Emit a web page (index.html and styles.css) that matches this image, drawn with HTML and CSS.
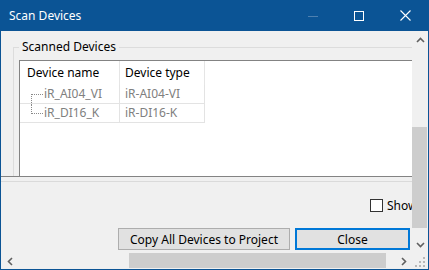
FILE: index.html
```html
<!DOCTYPE html>
<html lang="en">
<head>
    <meta charset="UTF-8">
    <title>Scan Devices</title>
    <link rel="stylesheet" href="styles.css">
</head>
<body>

<div class="window">
    <div class="titlebar">
        <span class="title">Scan Devices</span>
        <div class="caption-buttons">
            <span class="cap-btn"><svg width="10" height="10" viewBox="0 0 10 10"><path d="M0 5.5H10" stroke="#4d80b0" stroke-width="1"/></svg></span>
            <span class="cap-btn"><svg width="10" height="10" viewBox="0 0 10 10"><rect x="0.5" y="0.5" width="9" height="9" fill="none" stroke="#fff" stroke-width="1"/></svg></span>
            <span class="cap-btn"><svg width="11" height="11" viewBox="0 0 11 11"><path d="M0.5 0.5L10.5 10.5M10.5 0.5L0.5 10.5" stroke="#fff" stroke-width="1.1"/></svg></span>
        </div>
    </div>

    <div class="frame">
        <div class="viewport">
            <div class="upper-panel">
                <fieldset class="group">
                    <legend>Scanned Devices</legend>
                    <div class="listview">
                        <div class="lv-header">
                            <div class="col-name">Device name</div>
                            <div class="col-type">Device type</div>
                        </div>
                        <div class="lv-row">
                            <div class="col-name"><span class="tree tree-first"></span>iR_AI04_VI</div>
                            <div class="col-type">iR-AI04-VI</div>
                        </div>
                        <div class="lv-row">
                            <div class="col-name"><span class="tree tree-last"></span>iR_DI16_K</div>
                            <div class="col-type">iR-DI16-K</div>
                        </div>
                    </div>
                </fieldset>
            </div>
            <div class="lower-panel">
                <div class="options">
                    <label class="check"><span class="box"></span>Show</label>
                </div>
                <div class="actions">
                    <button class="btn btn-copy">Copy All Devices to Project</button>
                    <button class="btn btn-close">Close</button>
                </div>
            </div>
        </div>

        <div class="vscroll">
            <div class="arrow"><svg width="9" height="6" viewBox="0 0 9 6"><path d="M1 5L4.5 1.5L8 5" fill="none" stroke="#606060" stroke-width="1.6"/></svg></div>
            <div class="track-v"><div class="thumb-v"></div></div>
            <div class="arrow"><svg width="9" height="6" viewBox="0 0 9 6"><path d="M1 1L4.5 4.5L8 1" fill="none" stroke="#606060" stroke-width="1.6"/></svg></div>
        </div>

        <div class="hscroll">
            <div class="arrow"><svg width="6" height="9" viewBox="0 0 6 9"><path d="M5 1L1.5 4.5L5 8" fill="none" stroke="#606060" stroke-width="1.6"/></svg></div>
            <div class="track-h"><div class="thumb-h"></div></div>
            <div class="arrow"><svg width="6" height="9" viewBox="0 0 6 9"><path d="M1 1L4.5 4.5L1 8" fill="none" stroke="#606060" stroke-width="1.6"/></svg></div>
        </div>

        <div class="corner">
            <svg width="10" height="10" viewBox="0 0 10 10">
                <rect x="8" y="0" width="2" height="2" fill="#b8b8b8"/>
                <rect x="4" y="4" width="2" height="2" fill="#b8b8b8"/>
                <rect x="8" y="4" width="2" height="2" fill="#b8b8b8"/>
                <rect x="0" y="8" width="2" height="2" fill="#b8b8b8"/>
                <rect x="4" y="8" width="2" height="2" fill="#b8b8b8"/>
                <rect x="8" y="8" width="2" height="2" fill="#b8b8b8"/>
            </svg>
        </div>
    </div>
</div>

</body>
</html>
```

FILE: styles.css
```css
body {
    margin: 0;
    padding: 0;
    background: #ffffff;
    font-family: "Noto Sans", Arial, sans-serif;
    font-size: 12px;
    color: #000;
}
.window {
    width: 429px;
    height: 270px;
    box-sizing: border-box;
    border: 1px solid #0b5495;
    border-top: none;
    background: #f0f0f0;
    overflow: hidden;
}
.titlebar {
    height: 31px;
    background: #0b5495;
    display: flex;
    align-items: center;
    justify-content: space-between;
    color: #fff;
}
.title {
    padding-left: 8px;
    font-size: 12px;
    padding-bottom: 1px;
}
.caption-buttons {
    display: flex;
    height: 100%;
}
.cap-btn {
    width: 46px;
    display: flex;
    align-items: center;
    justify-content: center;
}
.frame {
    display: grid;
    grid-template-columns: 411px 16px;
    grid-template-rows: 222px 16px;
}
.viewport {
    overflow: hidden;
    position: relative;
}
.upper-panel {
    height: 145px;
    border-bottom: 1px solid #838383;
    overflow: hidden;
}
.group {
    margin: 8px 0 0 12px;
    padding: 0 0 0 5px;
    border: 1px solid #dcdcdc;
    border-right: none;
    border-bottom: none;
    width: 500px;
    min-width: 0;
}
.group legend {
    padding: 0 3px;
    margin: 0;
    line-height: 16px;
    color: #000;
}
.listview {
    margin-top: 5px;
    height: 200px;
    background: #fff;
    border-top: 1px solid #838383;
    border-left: 1px solid #838383;
}
.lv-header {
    display: flex;
    height: 24px;
    align-items: center;
}
.lv-header .col-name,
.lv-header .col-type {
    height: 24px;
    line-height: 24px;
    border-right: 1px solid #e5e5e5;
}
.col-name {
    width: 92px;
    padding-left: 7px;
}
.col-type {
    width: 79px;
    padding-left: 5px;
}
.lv-row {
    display: flex;
    height: 19px;
    line-height: 18px;
    color: #808080;
}
.lv-row .col-name,
.lv-row .col-type {
    border-right: 1px solid #e3e3e3;
    border-bottom: 1px solid #e3e3e3;
}
.lv-row .col-name {
    display: flex;
    padding-left: 11px;
    width: 88px;
}
.tree {
    width: 12px;
    margin-right: 1px;
    height: 19px;
    box-sizing: border-box;
    flex-shrink: 0;
}
.tree-first {
    border-top: 1px dotted #8a8a8a;
    border-left: 1px dotted #8a8a8a;
    margin-top: 9px;
    height: 11px;
}
.tree-last {
    border-bottom: 1px dotted #8a8a8a;
    border-left: 1px dotted #8a8a8a;
    height: 10px;
}
.lower-panel {
    padding-top: 4px;
}
.options {
    border-top: 1px solid #dadada;
    padding: 15px 0 0 369px;
    height: 31px;
    white-space: nowrap;
}
.check {
    display: flex;
    align-items: center;
    gap: 4px;
}
.box {
    flex-shrink: 0;
    width: 11px;
    height: 11px;
    border: 1px solid #333;
    background: #fff;
}
.actions {
    display: flex;
    gap: 5px;
    padding-left: 117px;
}
.btn {
    font-family: "Noto Sans", Arial, sans-serif;
    font-size: 12px;
    height: 22px;
    background: #e1e1e1;
    border: 1px solid #adadad;
    padding: 0;
    color: #000;
}
.btn-copy {
    width: 172px;
}
.btn-close {
    width: 115px;
    border: 2px solid #0078d7;
}
.vscroll {
    display: flex;
    flex-direction: column;
    background: #f0f0f0;
}
.vscroll .arrow {
    height: 17px;
    display: flex;
    align-items: center;
    justify-content: center;
}
.track-v {
    flex: 1;
    padding-top: 79px;
}
.thumb-v {
    width: 15px;
    height: 101px;
    background: #cdcdcd;
}
.hscroll {
    display: flex;
    background: #f0f0f0;
}
.hscroll .arrow {
    width: 17px;
    display: flex;
    align-items: center;
    justify-content: center;
}
.track-h {
    flex: 1;
    padding-left: 111px;
}
.thumb-h {
    width: 257px;
    height: 15px;
    background: #cdcdcd;
}
.corner {
    background: #f0f0f0;
    display: flex;
    align-items: flex-end;
    justify-content: flex-end;
    padding: 0 3px 2px 0;
}
```
